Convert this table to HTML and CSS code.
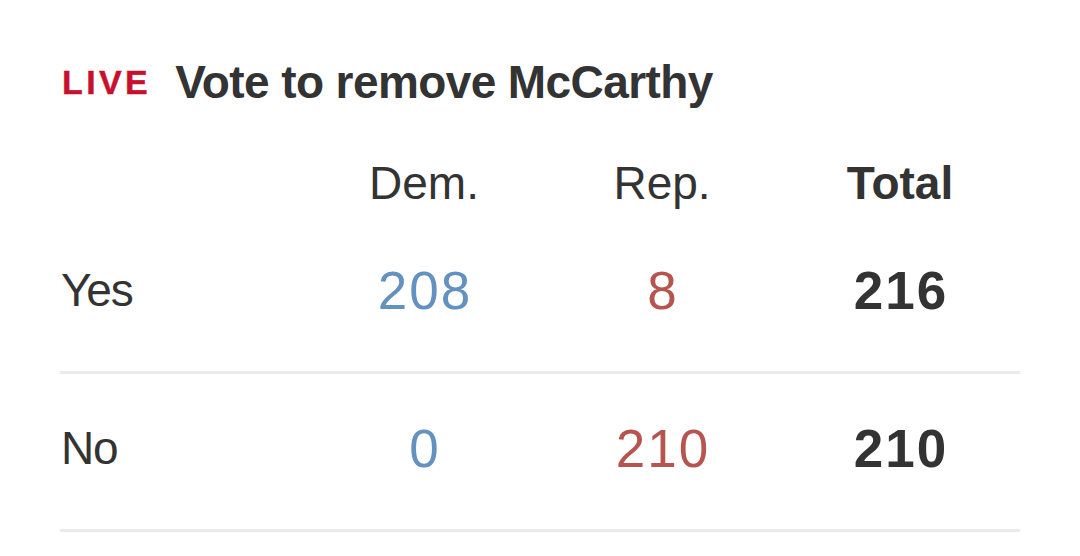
FILE: index.html
```html
<!DOCTYPE html>
<html>
<head>
<meta charset="utf-8">
<link rel="stylesheet" href="styles.css">
</head>
<body>
<div class="card">
  <div class="title-row">
    <span class="live">LIVE</span>
    <h1 class="title">Vote to remove McCarthy</h1>
  </div>
  <div class="table">
    <div class="row head">
      <div class="cell label"></div>
      <div class="cell">Dem.</div>
      <div class="cell">Rep.</div>
      <div class="cell total">Total</div>
    </div>
    <div class="row">
      <div class="cell label">Yes</div>
      <div class="cell num dem">208</div>
      <div class="cell num rep">8</div>
      <div class="cell num total">216</div>
    </div>
    <div class="row">
      <div class="cell label">No</div>
      <div class="cell num dem">0</div>
      <div class="cell num rep">210</div>
      <div class="cell num total">210</div>
    </div>
  </div>
</div>
</body>
</html>
```
FILE: styles.css
```css
html, body {
  margin: 0;
  padding: 0;
  background: #ffffff;
}
body {
  font-family: "Liberation Sans", Arial, sans-serif;
  color: #333333;
}
.card {
  padding: 54px 60px 0 60px;
  width: 960px;
}
.title-row {
  display: flex;
  align-items: center;
  gap: 24px;
  padding-left: 2px;
  height: 56px;
}
.live {
  font-weight: 700;
  font-size: 34px;
  line-height: 40px;
  letter-spacing: 3.4px;
  color: #c8102e;
  -webkit-text-stroke: 0.4px #c8102e;
}
.title {
  margin: 0;
  font-size: 46px;
  font-weight: 700;
  line-height: 56px;
  letter-spacing: -0.6px;
  color: #333333;
}
.table {
  margin-top: 36px;
}
.row {
  box-sizing: border-box;
  display: grid;
  grid-template-columns: 245px 238px 238px 238px;
  align-items: center;
  height: 158px;
  padding-bottom: 6px;
  border-bottom: 3px solid #ebebeb;
}
.row.head {
  height: 70px;
  padding-bottom: 6px;
  border-bottom: none;
  align-items: end;
}
.cell {
  text-align: center;
  font-size: 46px;
  line-height: 53px;
}
.cell.label {
  text-align: left;
  padding-left: 1px;
  letter-spacing: -1.2px;
}
.num {
  font-size: 53px;
  line-height: 60px;
  letter-spacing: 2px;
  padding-left: 2px;
}
.dem { color: #6391c0; }
.rep { color: #b65550; }
.total { font-weight: 700; color: #333333; }
```
